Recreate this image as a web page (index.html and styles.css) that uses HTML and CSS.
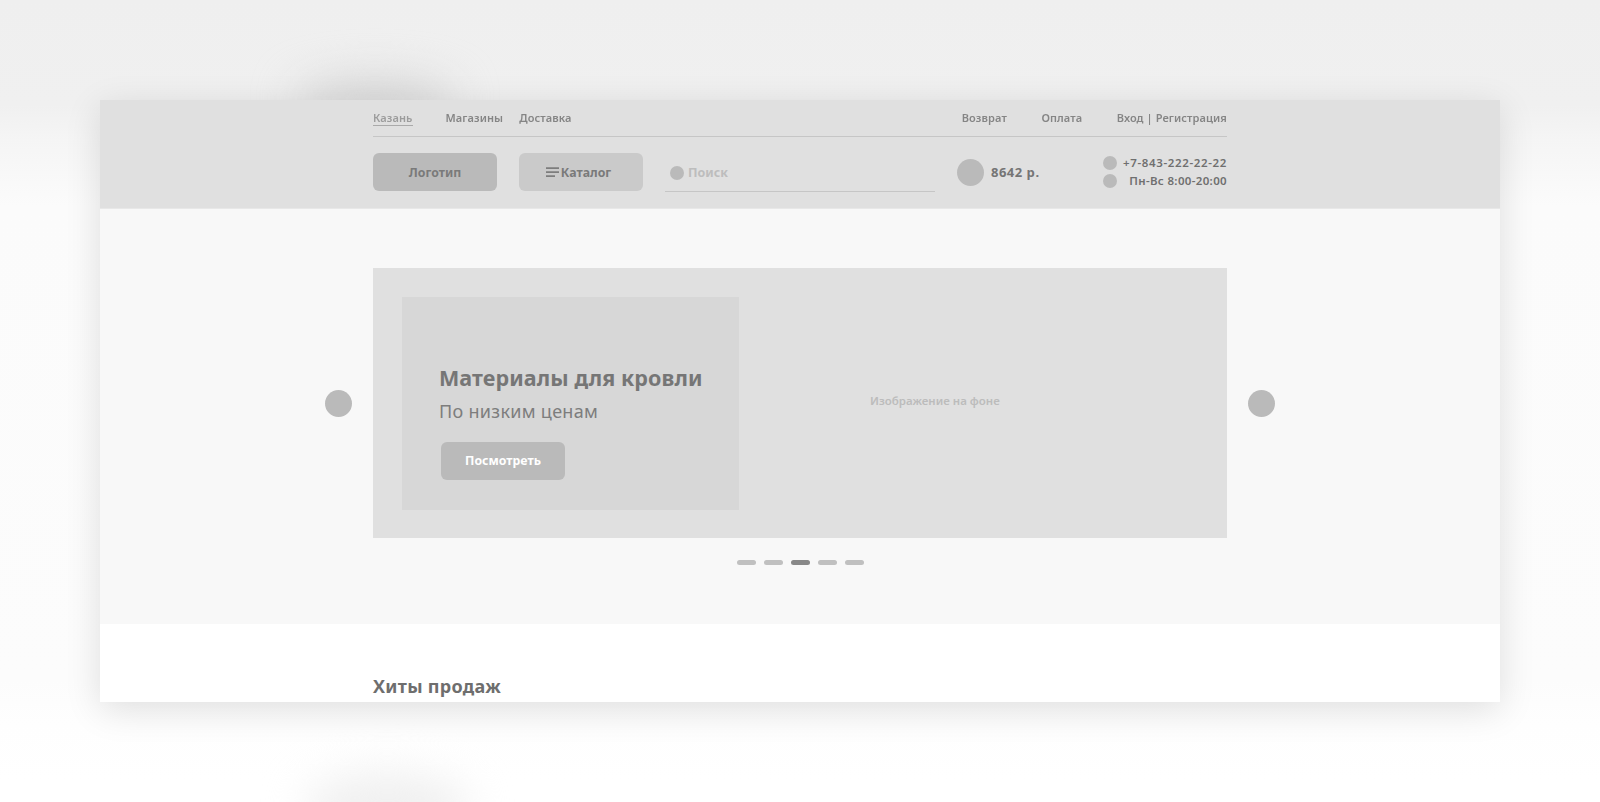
FILE: index.html
```html
<!DOCTYPE html>
<html lang="ru">
<head>
<meta charset="utf-8">
<title>Главная</title>
<link rel="stylesheet" href="styles.css">
</head>
<body>
<div class="blob blob-top"></div>
<div class="blob blob-bottom"></div>
<div class="window">
  <header class="header">
    <div class="container">
      <nav class="topnav">
        <div class="topnav-left">
          <a class="city">Казань</a>
          <a class="shops">Магазины</a>
          <a>Доставка</a>
        </div>
        <div class="topnav-right">
          <a class="ret">Возврат</a>
          <a class="pay">Оплата</a>
          <a>Вход | Регистрация</a>
        </div>
      </nav>
      <div class="mainbar">
        <div class="btn logo">Логотип</div>
        <div class="btn catalog">
          <svg class="menu-icon" width="13" height="11" viewBox="0 0 13 11"><path d="M0 1.2h13M0 5.2h13M0 9.2h9" stroke="#7d7d7d" stroke-width="1.8" fill="none"/></svg>
          <span>Каталог</span>
        </div>
        <div class="search"><i class="dot dot-14"></i><span>Поиск</span></div>
        <div class="cart"><i class="dot dot-27"></i><span>8642 р.</span></div>
        <div class="contacts">
          <div class="contact phone"><i class="dot dot-14"></i><span>+7-843-222-22-22</span></div>
          <div class="contact"><i class="dot dot-14"></i><span>Пн-Вс 8:00-20:00</span></div>
        </div>
      </div>
    </div>
  </header>
  <section class="hero">
    <i class="dot dot-27 arrow"></i>
    <div class="hero-col">
      <div class="slide">
        <div class="panel">
          <h1>Материалы для кровли</h1>
          <p>По низким ценам</p>
          <div class="btn cta">Посмотреть</div>
        </div>
        <div class="bgnote">Изображение на фоне</div>
      </div>
      <div class="pager">
        <i></i><i></i><i class="on"></i><i></i><i></i>
      </div>
    </div>
    <i class="dot dot-27 arrow"></i>
  </section>
  <section class="hits">
    <div class="container">
      <h2>Хиты продаж</h2>
    </div>
  </section>
</div>
</body>
</html>
```
FILE: styles.css
```css
* { box-sizing: border-box; }
html, body { margin: 0; height: 802px; overflow: hidden; }
body {
  position: relative;
  padding: 100px;
  background: linear-gradient(#efefef 0, #f0f0f0 105px, #f5f5f5 140px, #fbfbfb 205px, #fcfcfc 680px, #fefefe 725px, #fff 780px);
  font-family: "Noto Sans", "Open Sans", sans-serif;
}
.blob { position: absolute; border-radius: 50%; }
.blob-top { left: 295px; top: 80px; width: 160px; height: 38px; background: #d2d2d2; filter: blur(22px); }
.blob-bottom { left: 305px; top: 772px; width: 165px; height: 70px; background: #f0f0f0; filter: blur(20px); }

body::after {
  content: "";
  position: absolute;
  left: 100px; top: 100px;
  width: 1400px; height: 602px;
  box-shadow: 0 8px 34px rgba(0,0,0,.12);
  z-index: 0;
}
.window {
  position: relative;
  z-index: 1;
  width: 1400px;
  height: 602px;
  overflow: hidden;
  background: #fff;
}
.container { width: 854px; margin: 0 auto; }

.header { height: 109px; background: #e0e0e0; border-bottom: 1px solid #e8e8e8; }
.topnav {
  display: flex; justify-content: space-between; align-items: center;
  height: 37px; padding-bottom: 1px; border-bottom: 1px solid #c6c6c6;
  font-size: 11px; font-weight: 600; color: #858585; letter-spacing: .1px;
  filter: blur(.3px);
}
.topnav-left, .topnav-right { display: flex; }
.topnav a { line-height: 15px; border-bottom: 1px solid transparent; }
.topnav a.city { color: #9c9c9c; border-bottom-color: #aaa; margin-right: 33px; }
.shops { margin-right: 16px; }
.ret { margin-right: 34.5px; }
.pay { margin-right: 34.5px; }

.mainbar { display: flex; align-items: flex-start; height: 39px; margin-top: 16px; }
.btn {
  display: flex; align-items: center; justify-content: center;
  width: 124px; height: 38px; border-radius: 6px;
  font-size: 12.3px; font-weight: 700; color: #7a7a7a;
}
.logo { background: #bababa; margin-right: 22px; }
.catalog { background: #cacaca; margin-right: 22px; gap: 2px; padding-right: 5px; }
.search {
  display: flex; align-items: center; gap: 4px;
  width: 270px; height: 39px; padding: 1px 0 0 5px; margin-right: 22px;
  border-bottom: 1px solid #c6c6c6;
  font-size: 12.5px; font-weight: 700; color: #bdbdbd;
}
.dot { display: block; flex: none; border-radius: 50%; background: #bababa; }
.dot-14 { width: 14px; height: 14px; }
.dot-27 { width: 27px; height: 27px; }
.cart { display: flex; align-items: center; gap: 7px; height: 38px; font-size: 13px; font-weight: 700; color: #757575; letter-spacing: .5px; }
.contacts { margin-left: auto; margin-top: 2px; width: 124px; display: flex; flex-direction: column; gap: 4px; }
.contact {
  display: flex; align-items: center; justify-content: space-between;
  height: 14px; font-size: 11.5px; line-height: 13px; font-weight: 600; color: #6f6f6f; letter-spacing: .35px;
}
.contact .dot { margin-top: 1px; }
.contact.phone { letter-spacing: .65px; }

.hero {
  display: flex; justify-content: center; align-items: flex-start; gap: 21px;
  height: 415px; padding-top: 59px; background: #f8f8f8;
}
.arrow { margin-top: 122px; }
.hero-col { width: 854px; }
.slide { position: relative; display: flex; height: 270px; padding: 28.5px 28px 28px 29px; background: #e0e0e0; }
.panel { width: 337px; height: 213px; padding: 67px 0 0 37px; background: #d7d7d7; }
.panel h1 { margin: 0; font-size: 21.5px; line-height: 28px; font-weight: 700; color: #767676; letter-spacing: .1px; white-space: nowrap; }
.panel p { margin: 7.5px 0 0; font-size: 18px; line-height: 24px; font-weight: 400; color: #7d7d7d; letter-spacing: .3px; }
.cta { margin: 19px 0 0 2px; padding-bottom: 2px; background: #bababa; color: #fff; }
.bgnote { margin: 96px 0 0 131px; font-size: 11.5px; font-weight: 600; color: #bcbcbc; line-height: 16px; }
.pager { display: flex; justify-content: center; gap: 8px; margin-top: 22px; }
.pager i { width: 19px; height: 5px; border-radius: 3px; background: #c0c0c0; }
.pager i.on { background: #888; }

.hits { height: 78px; background: #fff; }
.hits h2 { margin: 0; padding-top: 49px; font-size: 18px; line-height: 26px; font-weight: 700; color: #6e6e6e; letter-spacing: .3px; }
```
